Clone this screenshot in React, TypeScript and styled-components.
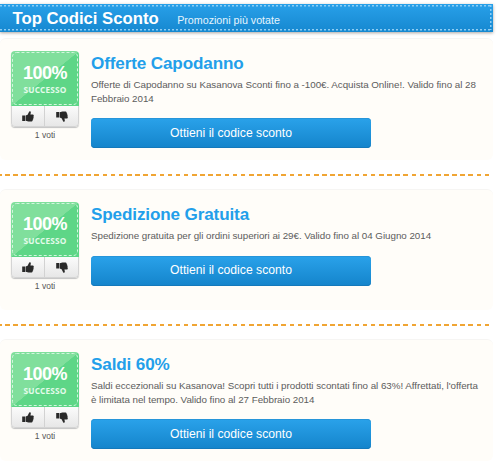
import React from 'react';
import styled, { createGlobalStyle } from 'styled-components';

const GlobalStyle = createGlobalStyle`
  * { box-sizing: border-box; }
  body { margin: 0; background: #fff; font-family: "Liberation Sans", Arial, sans-serif; overflow: hidden; }
`;

const Page = styled.main`
  width: 493px;
  height: 474px;
  padding-top: 4px;
`;

const Header = styled.header`
  height: 28px;
  margin-bottom: 6px;
  padding: 0 0 0 12.5px;
  display: flex;
  align-items: baseline;
  background:
    repeating-linear-gradient(90deg, #8dcdf4 0 2.5px, transparent 2.5px 4px) 0 1px / 490px 1.5px no-repeat,
    repeating-linear-gradient(90deg, #8dcdf4 0 2.5px, transparent 2.5px 4px) 0 25px / 490px 1.5px no-repeat,
    repeating-linear-gradient(180deg, #8dcdf4 0 2.5px, transparent 2.5px 4px) 490px 1px / 1.5px 25px no-repeat,
    linear-gradient(#28a0e9, #1688d0);
  box-shadow: 0 1px 3px rgba(40, 30, 20, 0.4);
`;

const Heading = styled.h1`
  margin: 0 18.5px 0 0;
  font-size: 16.7px;
  line-height: 30px;
  color: #fff;
  white-space: nowrap;
`;

const Subheading = styled.span`
  font-size: 10.7px;
  color: #e5f4fd;
  white-space: nowrap;
`;

const Card = styled.article<{ $height: number }>`
  height: ${p => p.$height}px;
  padding: 12px 10px 0 11px;
  display: flex;
  gap: 12px;
  border-top: 1px solid #f6f5f3;
  border-radius: 6px;
  background: #fffdf9;
`;

const Divider = styled.div`
  height: 2px;
  margin: 14px 1px 13px 0;
  background: repeating-linear-gradient(90deg, #f0a534 0 4.6px, transparent 4.6px 8.13px) -3.1px 0 / 500px 2px;
`;

const Vote = styled.div`
  width: 68px;
  flex: none;
`;

const VoteBox = styled.div`
  height: 76px;
  border-radius: 4px;
  overflow: hidden;
  box-shadow: 0 1px 1px #c2c2c2;
`;

const Score = styled.div`
  position: relative;
  height: 55px;
  padding-top: 11px;
  text-align: center;
  color: #fff;
  background: linear-gradient(141deg, #80df9c 0 50%, #5ed687 50.5%);
`;

const Stitch = styled.svg`
  position: absolute;
  inset: 0;
`;

const Percent = styled.div`
  font-size: 18px;
  line-height: 22px;
  font-weight: bold;
  letter-spacing: -0.5px;
`;

const Success = styled.div`
  font: 700 8.3px/11px "Open Sans", sans-serif;
  letter-spacing: 0.15px;
  color: #e4fbeb;
`;

const Thumbs = styled.div`
  display: flex;
  height: 21px;
  border: 1px solid #d4d4d4;
  border-top: 0;
  border-radius: 0 0 4px 4px;
  background: linear-gradient(#fbfbfb, #e7e7e7);
`;

const ThumbButton = styled.button`
  flex: 1;
  padding: 0;
  border: 0;
  background: none;
  display: flex;
  align-items: center;
  justify-content: center;
  &:first-child { flex: 0 0 32px; }
  & + & { border-left: 1px solid #d2d2d2; }
`;

const ThumbIcon = styled.svg<{ $down?: boolean }>`
  display: block;
  transform: ${p => (p.$down ? 'scaleY(-1)' : 'none')};
`;

const VoteCount = styled.div`
  margin-top: 3px;
  font-size: 8.5px;
  line-height: 11px;
  text-align: center;
  color: #555;
`;

const Details = styled.div`
  flex: 1;
  min-width: 0;
  padding-top: 1px;
`;

const Title = styled.h2`
  margin: 0;
  font-size: 17.1px;
  line-height: 23px;
  letter-spacing: -0.13px;
  color: #239fea;
`;

const Text = styled.p`
  margin: 3px 0 13px;
  font-size: 9.8px;
  line-height: 13.5px;
  letter-spacing: -0.035px;
  color: #5c5c5c;
  white-space: nowrap;
`;

const Line = styled.span`
  display: block;
`;

const CouponButton = styled.button`
  display: block;
  width: 280px;
  height: 30px;
  padding: 0 0 1px;
  border: 0;
  border-radius: 4px;
  font: 12.2px "Liberation Sans", Arial, sans-serif;
  color: #fff;
  background: linear-gradient(#2aa2ea, #1484cb);
  box-shadow: inset 0 1px 0 #2795d9, inset 0 -1px 0 #1479bb;
`;

const Thumb = ({ down }: { down?: boolean }) => (
  <ThumbIcon $down={down} width="12" height="11" viewBox="0 0 12 11">
    <path fill="#292929" d="M0.2 4.6H3.2V10H0.2zM3.7 4.6 5.6 3.8 7.1 0.7Q7.3 0 8.1.2 9.1.5 8.8 1.8L8.4 3.4h2.5q1 .2.9 1.1-.1.6-.4.8.5.4.3 1-.1.6-.5.8.3.5.1 1-.2.5-.6.6.2.5-.1.9-.3.9-1 .9H6.4L3.7 9.8z" />
  </ThumbIcon>
);

interface Offer {
  title: string;
  lines: string[];
  height: number;
}

const offers: Offer[] = [
  {
    title: 'Offerte Capodanno',
    height: 122,
    lines: [
      'Offerte di Capodanno su Kasanova Sconti fino a -100€. Acquista Online!. Valido fino al 28',
      'Febbraio 2014',
    ],
  },
  {
    title: 'Spedizione Gratuita',
    height: 121,
    lines: ['Spedizione gratuita per gli ordini superiori ai 29€. Valido fino al 04 Giugno 2014'],
  },
  {
    title: 'Saldi 60%',
    height: 122,
    lines: [
      "Saldi eccezionali su Kasanova! Scopri tutti i prodotti scontati fino al 63%! Affrettati, l'offerta",
      'è limitata nel tempo. Valido fino al 27 Febbraio 2014',
    ],
  },
];

export default function App() {
  return (
    <Page>
      <GlobalStyle />
      <Header>
        <Heading>Top Codici Sconto</Heading>
        <Subheading>Promozioni più votate</Subheading>
      </Header>
      {offers.map((offer, i) => (
        <React.Fragment key={offer.title}>
          {i > 0 && <Divider />}
          <Card $height={offer.height}>
            <Vote>
              <VoteBox>
                <Score>
                  <Stitch width="68" height="55">
                    <rect x="1.5" y="1.5" width="65" height="52" rx="4" fill="none" stroke="#d3f5de" strokeWidth="1" strokeDasharray="3 2" />
                  </Stitch>
                  <Percent>100%</Percent>
                  <Success>SUCCESSO</Success>
                </Score>
                <Thumbs>
                  <ThumbButton aria-label="Mi piace"><Thumb /></ThumbButton>
                  <ThumbButton aria-label="Non mi piace"><Thumb down /></ThumbButton>
                </Thumbs>
              </VoteBox>
              <VoteCount>1 voti</VoteCount>
            </Vote>
            <Details>
              <Title>{offer.title}</Title>
              <Text>
                {offer.lines.map(line => <Line key={line}>{line}</Line>)}
              </Text>
              <CouponButton>Ottieni il codice sconto</CouponButton>
            </Details>
          </Card>
        </React.Fragment>
      ))}
    </Page>
  );
}
